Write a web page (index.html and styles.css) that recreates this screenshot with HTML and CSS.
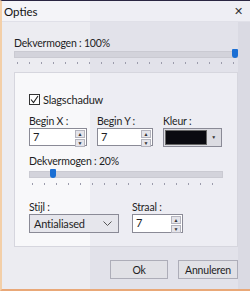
FILE: index.html
```html
<!DOCTYPE html>
<html lang="nl">
<head>
    <meta charset="UTF-8">
    <title>Opties</title>
    <link rel="stylesheet" href="styles.css">
</head>
<body>
    <div class="window">
        <div class="titlebar">
            <span class="title">Opties</span>
            <span class="close">&#x2715;</span>
        </div>
        <div class="content">
            <div class="label top-label">Dekvermogen : 100%</div>
            <div class="slider">
                <div class="track"></div>
                <div class="thumb thumb-end"></div>
            </div>
            <div class="ticks wide-ticks"></div>

            <div class="panel">
                <label class="check">
                    <span class="box">
                        <svg width="9" height="9" viewBox="0 0 9 9"><path d="M1 4.5 L3.5 7.5 L8 1" fill="none" stroke="#222" stroke-width="1.1"/></svg>
                    </span>
                    Slagschaduw
                </label>

                <div class="row">
                    <div class="field">
                        <div class="label">Begin X :</div>
                        <div class="spin w58">
                            <span class="val">7</span>
                            <span class="arrows"><span>&#9650;</span><span>&#9660;</span></span>
                        </div>
                    </div>
                    <div class="field">
                        <div class="label">Begin Y :</div>
                        <div class="spin w56">
                            <span class="val">7</span>
                            <span class="arrows"><span>&#9650;</span><span>&#9660;</span></span>
                        </div>
                    </div>
                    <div class="field">
                        <div class="label">Kleur :</div>
                        <div class="color">
                            <span class="swatch"></span>
                            <span class="drop">&#9660;</span>
                        </div>
                    </div>
                </div>

                <div class="label mid-label">Dekvermogen : 20%</div>
                <div class="slider">
                    <div class="track"></div>
                    <div class="thumb thumb-low"></div>
                </div>
                <div class="ticks inner-ticks"></div>

                <div class="row bottom-row">
                    <div class="field">
                        <div class="label">Stijl :</div>
                        <div class="combo">
                            <span>Antialiased</span>
                            <svg width="9" height="5" viewBox="0 0 9 5"><path d="M0.5 0.5 L4.5 4.5 L8.5 0.5" fill="none" stroke="#555" stroke-width="1"/></svg>
                        </div>
                    </div>
                    <div class="field">
                        <div class="label">Straal :</div>
                        <div class="spin w51 tall">
                            <span class="val">7</span>
                            <span class="arrows"><span>&#9650;</span><span>&#9660;</span></span>
                        </div>
                    </div>
                </div>
            </div>

            <div class="buttons">
                <button class="btn ok">Ok</button>
                <button class="btn">Annuleren</button>
            </div>
        </div>
    </div>
</body>
</html>
```

FILE: styles.css
```css
html, body {
    margin: 0;
    padding: 0;
}
body {
    width: 250px;
    height: 291px;
    overflow: hidden;
    font-family: Lato, "Noto Sans", sans-serif;
    font-size: 10.5px;
    letter-spacing: -0.2px;
    color: #1e1e24;
}
.window {
    box-sizing: border-box;
    width: 250px;
    height: 291px;
    border-top: 1px solid #2a2542;
    border-left: 2px solid #f3cfa8;
    border-bottom: 2px solid #e9a878;
    background: linear-gradient(to right, #ececf1 0, #ececf1 88px, #e2e2ea 88px, #e2e2ea 236px, #dadae3 236px);
}
.titlebar {
    height: 20px;
    display: flex;
    align-items: center;
    justify-content: space-between;
    padding: 0 7px 0 2px;
    background: linear-gradient(to right, #f4f4f8 0, #f4f4f8 88px, #eeeef4 88px);
    border-bottom: 1px solid #e0e0e8;
}
.title {
    font-size: 11.5px;
    letter-spacing: 0;
    color: #111;
}
.close {
    font-size: 11px;
    color: #333;
}
.content {
    padding: 14px 12px 0 12px;
}
.label {
    line-height: 13px;
    white-space: nowrap;
}
.top-label {
    line-height: 14px;
}
.slider {
    position: relative;
    height: 10px;
}
.track {
    position: absolute;
    left: 0;
    right: 0;
    top: 1px;
    height: 5px;
    background: #d3d3db;
    border: 1px solid #cacad2;
}
.thumb {
    position: absolute;
    top: -1px;
    width: 6px;
    height: 9px;
    background: #1b6fd4;
    border-radius: 1px 1px 3px 3px;
}
.thumb-end {
    right: 0;
}
.thumb-low {
    left: 21px;
}
.ticks {
    height: 2px;
    background: repeating-linear-gradient(to right, #9c9cac 0, #9c9cac 1px, transparent 1px, transparent 12px);
}
.wide-ticks {
    margin: 2px 3px 0 3px;
}
.panel {
    margin-top: 8px;
    height: 175px;
    box-sizing: border-box;
    padding: 21px 14px 0 14px;
    border: 1px solid #d6d6de;
    background: linear-gradient(to right, #f8f8fa 0, #f8f8fa 75px, #ededf3 75px);
}
.check {
    display: flex;
    align-items: center;
    gap: 3px;
    height: 11px;
    font-size: 11px;
}
.box {
    box-sizing: border-box;
    width: 11px;
    height: 11px;
    border: 1px solid #333;
    background: #fff;
    display: flex;
    align-items: center;
    justify-content: center;
}
.row {
    display: flex;
    gap: 10px;
    margin-top: 10px;
}
.spin {
    box-sizing: border-box;
    height: 18px;
    display: flex;
    justify-content: space-between;
    align-items: stretch;
    border: 1px solid #8a8a96;
    background: #fff;
}
.spin.tall {
    height: 19px;
}
.w58 { width: 58px; }
.w56 { width: 56px; }
.w51 { width: 51px; }
.val {
    padding-left: 3px;
    line-height: 16px;
    font-size: 11px;
}
.arrows {
    display: flex;
    flex-direction: column;
    gap: 1px;
    padding: 1px;
}
.arrows span {
    flex: 1;
    width: 8px;
    font-size: 5px;
    line-height: 6px;
    letter-spacing: 0;
    text-align: center;
    background: #e4e4ea;
    border: 1px solid #b4b4be;
    color: #333;
}
.color {
    box-sizing: border-box;
    width: 59px;
    height: 19px;
    display: flex;
    align-items: stretch;
    border: 1px solid #8a8a96;
    background: #dcdce2;
    padding: 1px;
}
.swatch {
    flex: 1;
    background: #0a0a10;
    border: 1px solid #666;
}
.drop {
    width: 13px;
    font-size: 5px;
    line-height: 15px;
    text-align: center;
    color: #333;
}
.mid-label {
    margin-top: 7px;
    line-height: 14px;
    margin-bottom: 2px;
}
.inner-ticks {
    margin: 3px 0 0 3px;
}
.bottom-row {
    margin-top: 16px;
    gap: 13px;
}
.combo {
    box-sizing: border-box;
    width: 90px;
    height: 19px;
    display: flex;
    align-items: center;
    justify-content: space-between;
    padding: 0 6px 0 4px;
    border: 1px solid #8a8a96;
    background: #e6e6ec;
    font-size: 11px;
}
.buttons {
    display: flex;
    justify-content: flex-end;
    gap: 10px;
    margin-top: 13px;
}
.btn {
    box-sizing: border-box;
    height: 19px;
    width: 58px;
    padding: 0;
    font-family: inherit;
    font-size: 10.5px;
    letter-spacing: -0.2px;
    color: #1e1e24;
    background: #e1e1e6;
    border: 1px solid #adadb8;
}
.btn + .btn {
    width: 60px;
}
```
